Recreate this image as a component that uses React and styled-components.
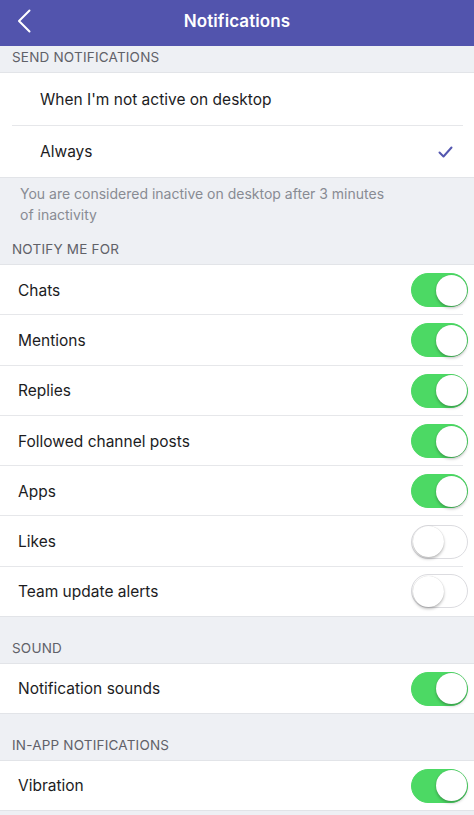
import React from 'react'
import styled, { createGlobalStyle } from 'styled-components'

const Global = createGlobalStyle`
  body {
    margin: 0;
    background: #eef0f4;
    font-family: Inter, "Open Sans", sans-serif;
    -webkit-font-smoothing: antialiased;
  }
`

const Screen = styled.div`
  width: 474px;
  height: 815px;
  overflow: hidden;
  background: #eef0f4;
`

const NavBar = styled.div`
  height: 46px;
  background: #5254ad;
  display: grid;
  grid-template-columns: 60px 1fr 60px;
  align-items: center;
  padding-bottom: 4px;
  box-sizing: border-box;
  color: #fff;
`

const Back = styled.div`
  padding-left: 17px;
  display: flex;
  align-items: center;
`

const Title = styled.div`
  text-align: center;
  font-size: 17px;
  font-weight: 600;
  letter-spacing: 0.1px;
`

const SectionHeader = styled.div`
  height: ${props => props.height || 27}px;
  display: flex;
  align-items: flex-end;
  padding: 0 12px 7px;
  box-sizing: border-box;
  font-size: 13.5px;
  color: #606168;
  letter-spacing: 0.2px;
  border-bottom: 1px solid #e2e4e8;
`

const Group = styled.div`
  background: #fff;
`

const Row = styled.div`
  height: ${props => props.height || 50}px;
  display: flex;
  align-items: center;
  justify-content: space-between;
  padding: 0 6px 0 ${props => props.indent || 18}px;
  box-sizing: border-box;
  font-size: 15.5px;
  color: #1c1c1e;
  position: relative;
  &:not(:last-child)::after {
    content: '';
    position: absolute;
    left: ${props => props.lineLeft || 0}px;
    right: 11px;
    bottom: 0;
    height: 1px;
    background: #e6e7ea;
  }
  &:last-child {
    border-bottom: 1px solid #e2e4e8;
  }
`

const Footer = styled.div`
  padding: 5px 20px 0;
  height: 62px;
  box-sizing: border-box;
  font-size: 14px;
  line-height: 21px;
  color: #888b93;
  width: 410px;
`

const Track = styled.div`
  width: 57px;
  height: 34px;
  border-radius: 17px;
  box-sizing: border-box;
  background: ${props => (props.on ? '#4cd964' : '#fff')};
  border: 1.5px solid ${props => (props.on ? '#4cd964' : '#dcdce0')};
  display: flex;
  align-items: center;
  justify-content: ${props => (props.on ? 'flex-end' : 'flex-start')};
  padding: 0 0.5px;
`

const Knob = styled.div`
  width: 31px;
  height: 31px;
  border-radius: 50%;
  background: #fff;
  box-shadow: 0 2px 3px rgba(0, 0, 0, 0.25), 0 0 1px rgba(0, 0, 0, 0.2);
`

const Check = styled.div`
  padding-right: 15px;
  display: flex;
`

const Toggle = ({ on }) => (
  <Track on={on ? 1 : 0}>
    <Knob />
  </Track>
)

const notify = [
  ['Chats', true],
  ['Mentions', true],
  ['Replies', true],
  ['Followed channel posts', true],
  ['Apps', true],
  ['Likes', false],
  ['Team update alerts', false]
]

export default function App() {
  return (
    <Screen>
      <Global />
      <NavBar>
        <Back>
          <svg width="14" height="24" viewBox="0 0 14 24">
            <path d="M12.5 1.5 L2 12 L12.5 22.5" fill="none" stroke="#fff" strokeWidth="2" strokeLinecap="round" strokeLinejoin="round" />
          </svg>
        </Back>
        <Title>Notifications</Title>
        <div />
      </NavBar>

      <SectionHeader>SEND NOTIFICATIONS</SectionHeader>
      <Group>
        <Row indent={40} height={53} lineLeft={12}>When I'm not active on desktop</Row>
        <Row indent={40} height={52}>
          Always
          <Check>
            <svg width="15" height="12" viewBox="0 0 15 12">
              <path d="M1.5 6.5 L5.5 10.5 L13.5 1.5" fill="none" stroke="#5457b0" strokeWidth="2" strokeLinecap="round" strokeLinejoin="round" />
            </svg>
          </Check>
        </Row>
      </Group>
      <Footer>You are considered inactive on desktop after 3 minutes of inactivity</Footer>

      <SectionHeader height={25}>NOTIFY ME FOR</SectionHeader>
      <Group>
        {notify.map(([label, on]) => (
          <Row key={label} height={50.3}>
            {label}
            <Toggle on={on} />
          </Row>
        ))}
      </Group>

      <SectionHeader height={47}>SOUND</SectionHeader>
      <Group>
        <Row>
          Notification sounds
          <Toggle on />
        </Row>
      </Group>

      <SectionHeader height={47}>IN-APP NOTIFICATIONS</SectionHeader>
      <Group>
        <Row>
          Vibration
          <Toggle on />
        </Row>
      </Group>
    </Screen>
  )
}
